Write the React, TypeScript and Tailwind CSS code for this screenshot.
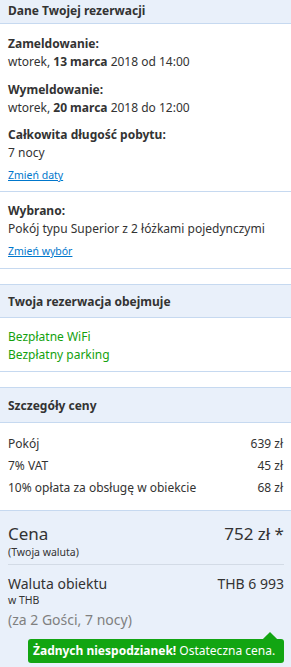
export default function App() {
  return (
    <div className="w-[291px] h-[667px] overflow-hidden bg-white text-[12px] leading-[18px] text-[#333] font-['Noto_Sans',sans-serif]">
      {/* Booking details */}
      <div className="h-[24px] px-2 pb-[2px] flex items-center bg-[#e9f0fa] border-b border-[#c6d9f0] font-bold">
        Dane Twojej rezerwacji
      </div>
      <div className="px-2 pt-[11px] pb-[9px] border-b border-[#c6d9f0]">
        <p className="font-bold">Zameldowanie:</p>
        <p>
          wtorek, <b>13 marca</b> 2018 od 14:00
        </p>
        <p className="font-bold mt-[10px]">Wymeldowanie:</p>
        <p>
          wtorek, <b>20 marca</b> 2018 do 12:00
        </p>
        <p className="font-bold mt-[9px]">Całkowita długość pobytu:</p>
        <p>7 nocy</p>
        <a className="block mt-[6px] text-[10.5px] leading-[14px] text-[#0077cc] underline">Zmień daty</a>
      </div>
      <div className="px-2 pt-[10px] pb-[10px] border-b border-[#c6d9f0]">
        <p className="font-bold">Wybrano:</p>
        <p>Pokój typu Superior z 2 łóżkami pojedynczymi</p>
        <a className="block mt-[6px] text-[10.5px] leading-[14px] text-[#0077cc] underline">Zmień wybór</a>
      </div>

      {/* Includes */}
      <div className="mt-[15px] border-t border-[#c6d9f0]">
        <div className="h-[33px] px-2 pt-[2px] flex items-center bg-[#e9f0fa] border-b border-[#c6d9f0] font-bold">
          Twoja rezerwacja obejmuje
        </div>
        <div className="px-2 pt-[10px] pb-[7px] text-[#13a10e] border-b border-[#c6d9f0]">
          <p>Bezpłatne WiFi</p>
          <p>Bezpłatny parking</p>
        </div>
      </div>

      {/* Price */}
      <div className="mt-[15px] border-t border-[#c6d9f0]">
        <div className="h-[35px] px-2 pt-[2px] flex items-center bg-[#e9f0fa] border-b border-[#c6d9f0] font-bold">
          Szczegóły ceny
        </div>
        <div className="px-2 pt-[10px] pb-[11px] border-b border-[#c6d9f0]">
          {[
            ["Pokój", "639 zł"],
            ["7% VAT", "45 zł"],
            ["10% opłata za obsługę w obiekcie", "68 zł"],
          ].map(([label, value]) => (
            <div key={label} className="flex justify-between leading-[22px]">
              <span>{label}</span>
              <span>{value}</span>
            </div>
          ))}
        </div>
        <div className="bg-[#e9f0fa] pl-2 pr-[7px] pt-[12px] pb-[10px]">
          <div className="flex justify-between text-[17px] leading-[22px]">
            <span>Cena</span>
            <span>752 zł *</span>
          </div>
          <p className="text-[10.5px] leading-[14px]">(Twoja waluta)</p>
          <div className="mt-[5px] border-t border-[#d3dbe6]" />
          <div className="mt-[10px] flex justify-between text-[14px] leading-[18px]">
            <span>Waluta obiektu</span>
            <span>THB 6 993</span>
          </div>
          <p className="text-[10.5px] leading-[14px]">w THB</p>
          <p className="mt-[4px] text-[14px] leading-[18px] text-[#808080]">(za 2 Gości, 7 nocy)</p>
          <div className="mt-[10px] ml-[20px] relative">
            <div className="absolute -top-[5px] right-[9px] w-[10px] h-[10px] bg-[#12a512] rotate-45" />
            <div className="relative bg-[#12a512] text-white rounded-[3px] px-[5px] h-[24px] flex items-center text-[12px] whitespace-nowrap">
              <b>Żadnych niespodzianek!</b>&nbsp;Ostateczna cena.
            </div>
          </div>
        </div>
      </div>
    </div>
  );
}
